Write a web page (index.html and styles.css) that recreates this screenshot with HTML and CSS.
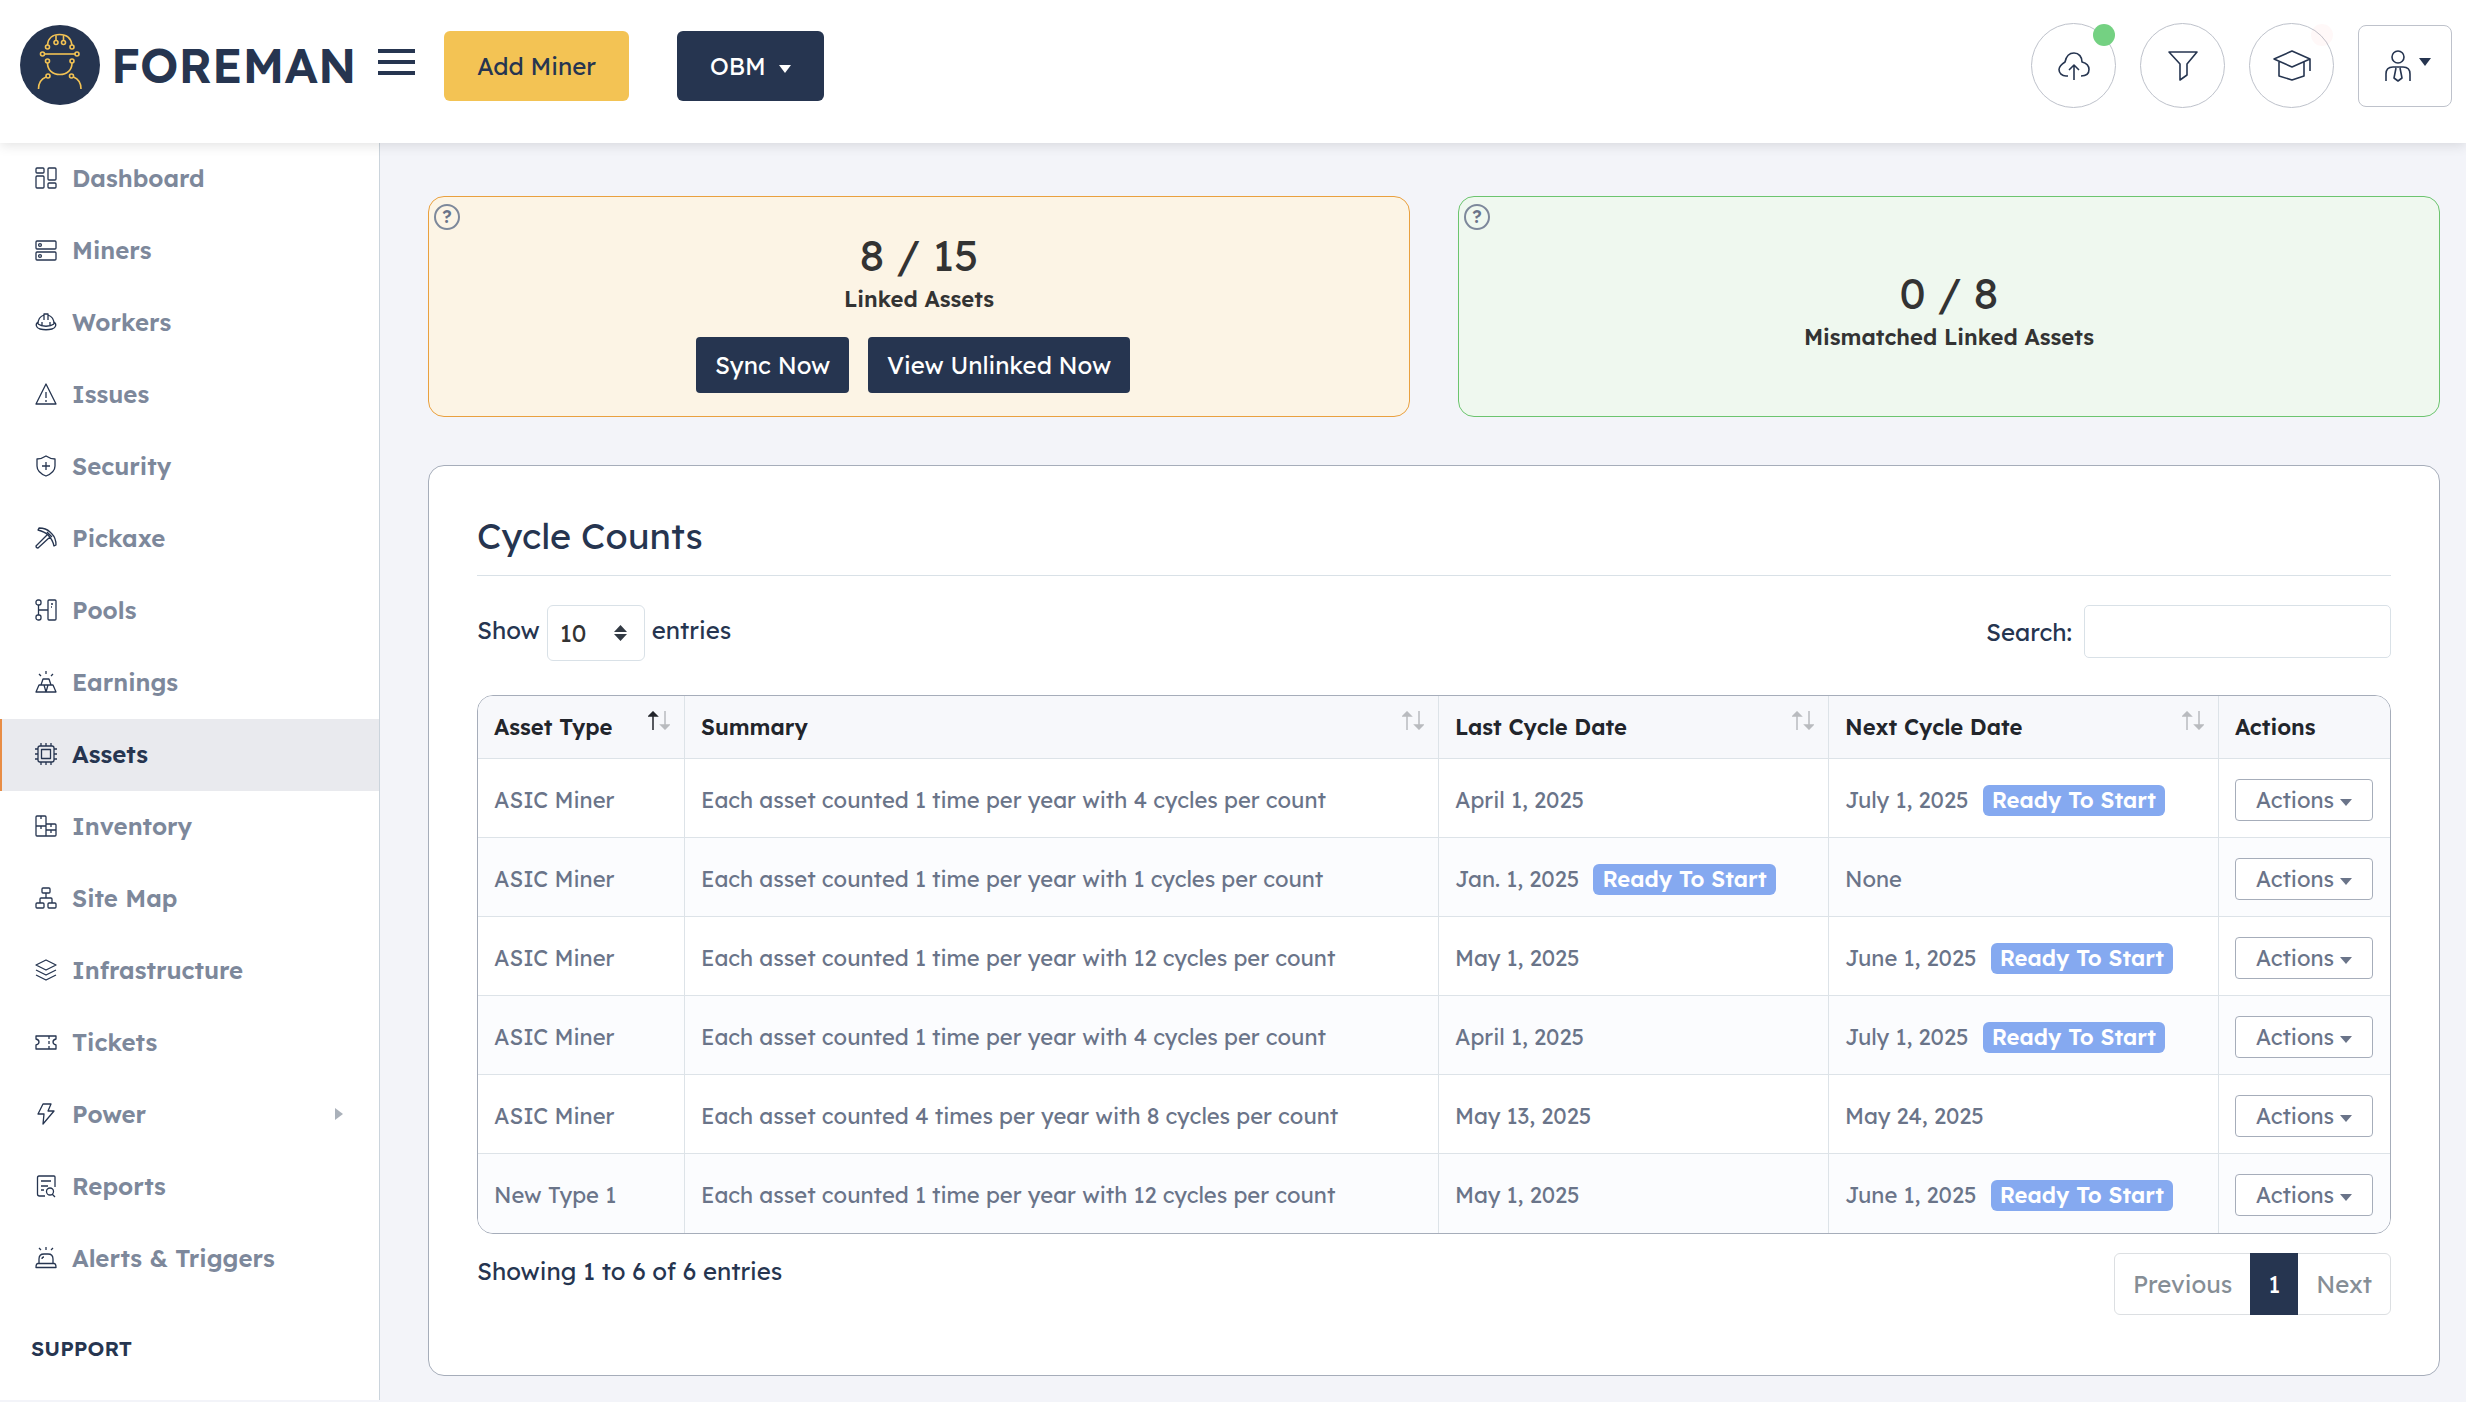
FILE: index.html
```html
<!DOCTYPE html>
<html lang="en">
<head>
  <meta charset="UTF-8" />
  <meta name="viewport" content="width=device-width, initial-scale=1" />
  <title>Foreman - Assets</title>
  <link rel="stylesheet" href="styles.css">
</head>
<body>
  <header class="topbar">
    <a href="#" class="brand">
      <svg class="brand-logo" viewBox="0 0 80 80">
        <circle cx="40" cy="40" r="40" fill="#263550"/>
        <g fill="none" stroke="#f3c354" stroke-width="1.600">
          <path d="M27.500 20C28 13 33 9.500 39.500 9.500S51 13 52 20M36 10v5.500M43.500 10v5.500"/>
          <circle cx="27.500" cy="22" r="2"/><circle cx="52" cy="22" r="2"/>
          <circle cx="36" cy="17.500" r="2"/><circle cx="43.500" cy="17.500" r="2"/>
          <circle cx="22.500" cy="29" r="2"/><circle cx="57" cy="29" r="2"/>
          <path d="M24.500 29H55"/>
          <circle cx="27.500" cy="36" r="2"/><circle cx="52" cy="36" r="2"/>
          <path d="M27.500 38c0 7 5 11.500 12.300 11.500S52 45 52 38"/>
          <circle cx="28" cy="51" r="2"/><circle cx="51.500" cy="51" r="2"/>
          <path d="M26 52c-5 2-7.500 5.500-7.500 12M53.500 52c5 2 7.500 5.500 7.500 12"/>
        </g>
      </svg>
      <span>FOREMAN</span>
    </a>
    <button class="menu-toggle" aria-label="Toggle menu"><i></i><i></i><i></i></button>
    <button class="btn-top btn-yellow">Add Miner</button>
    <button class="btn-top btn-navy">OBM <span class="caret"></span></button>

    <div class="top-actions">
      <button class="round-btn" aria-label="Uploads">
        <svg width="32" height="30" viewBox="0 0 32 30"><path d="M10 25H8C4 25 1 22 1 18.500S4 13 7 11C8 6 11 2 16 2s8 4 8 9c4 1 7 3.500 7 7.500S28 25 23 25M16 29V14M11 19l5-5 5 5"/></svg>
        <span class="dot dot-green"></span>
      </button>
      <button class="round-btn" aria-label="Filter">
        <svg width="32" height="32" viewBox="0 0 32 32"><path d="M2 2h28L20 14v11l-7 5V14z"/></svg>
      </button>
      <button class="round-btn" aria-label="Academy">
        <svg width="40" height="32" viewBox="0 0 40 32"><path d="M20 1l18 8-18 8L2 9zM7 12v14l13 4 12-4V12M38 9v12"/></svg>
        <span class="dot dot-faint"></span>
      </button>
      <button class="user-btn" aria-label="Account">
        <svg width="26" height="32" viewBox="0 0 26 32"><circle cx="13" cy="7" r="6"/><path d="M1 31v-7c0-5 3-7 7-7h10c4 0 7 2 7 7v7M11 18l-2 10 4 3 4-3-2-10"/></svg>
        <span class="caret"></span>
      </button>
    </div>
  </header>

  <div class="layout">
    <nav class="sidebar">
      <a href="#"><svg viewBox="0 0 22 22"><rect x="1" y="1" width="8" height="5" rx="1"/><rect x="1" y="9" width="8" height="12" rx="1"/><rect x="13" y="1" width="8" height="12" rx="1"/><rect x="13" y="16" width="8" height="5" rx="1"/></svg>Dashboard</a>
      <a href="#"><svg viewBox="0 0 22 22"><rect x="1" y="2" width="20" height="8" rx="1"/><rect x="1" y="13" width="20" height="8" rx="1"/><circle cx="5" cy="6" r="1.400"/><circle cx="5" cy="17" r="1.400"/></svg>Miners</a>
      <a href="#"><svg viewBox="0 0 22 22"><path d="M3 13c0-5 3-8 6-9v5M13 9V4c3 1 6 4 6 9M9 4V3h4v1M3 11c-3 2-2 6 2 7s8 1 12 0 5-5 2-7M3 13c4 3 12 3 16 0M7 14v-3M15 14v-3"/></svg>Workers</a>
      <a href="#"><svg viewBox="0 0 22 22"><path d="M11 1l10 20H1zM11 9v6M11 17v2"/></svg>Issues</a>
      <a href="#"><svg viewBox="0 0 22 22"><path d="M11 1c3 2 6 3 9 3v7c0 5-4 8-9 10-5-2-9-5-9-10V4c3 0 6-1 9-3zM11 7v8M7 11h8"/></svg>Security</a>
      <a href="#"><svg viewBox="0 0 22 22"><path d="M4 1c4 0 8 1 11 4l2 2c3 3 4 7 4 11l-2 1c-1-5-3-8-6-11S7 4 3 3zM12 8L1 19q0 2 2 2L15 10M12 5l5 5"/></svg>Pickaxe</a>
      <a href="#"><svg viewBox="0 0 22 22"><rect x="1" y="1" width="5" height="5" rx="2"/><rect x="1" y="16" width="5" height="5" rx="2"/><rect x="13" y="1" width="8" height="20" rx="1"/><path d="M3.500 6v10M3.500 11H13M16 5h2M16 8h1"/></svg>Pools</a>
      <a href="#"><svg viewBox="0 0 22 22"><path d="M8 8h6l2 6H6zM4 14h5l2 7H1zM13 14h5l3 7H11zM11 0v3M4 3l2 2M18 3l-2 2"/></svg>Earnings</a>
      <a href="#" class="active"><svg viewBox="0 0 22 22"><rect x="3" y="3" width="16" height="16" rx="2"/><rect x="6.500" y="6.500" width="9" height="9"/><path d="M6 0v3M11 0v3M16 0v3M6 19v3M11 19v3M16 19v3M0 6h3M0 11h3M0 16h3M19 6h3M19 11h3M19 16h3"/></svg>Assets</a>
      <a href="#"><svg viewBox="0 0 22 22"><path d="M1 11V2q0-1 1-1h8q1 0 1 1v18q0 1-1 1H2q-1 0-1-1v-9h10M11 9h9q1 0 1 1v10q0 1-1 1h-9M11 15h10M6 1v3M6 11v3M16 9v3M16 15v3"/></svg>Inventory</a>
      <a href="#"><svg viewBox="0 0 22 22"><rect x="7" y="1" width="8" height="5" rx="1"/><rect x="1" y="16" width="8" height="5" rx="1"/><rect x="13" y="16" width="8" height="5" rx="1"/><path d="M11 6v5M5 16v-4q0-1 1-1h10q1 0 1 1v4"/></svg>Site Map</a>
      <a href="#"><svg viewBox="0 0 22 22"><path d="M11 1l10 5-10 5L1 6zM1 11l10 5 10-5M1 16l10 5 10-5"/></svg>Infrastructure</a>
      <a href="#"><svg viewBox="0 0 22 22"><path d="M1 5h20v3c-4 1-4 5 0 6v4H1v-4c4-1 4-5 0-6zM14 5v3M14 10v3M14 15v3"/></svg>Tickets</a>
      <a href="#"><svg viewBox="0 0 22 22"><path d="M8 1h8l-3 7h6L8 21l1-10H3z"/></svg>Power<span class="nav-caret"></span></a>
      <a href="#"><svg viewBox="0 0 22 22"><path d="M20 12V2q0-1-1-1H4Q2.500 1 2.500 3v16q0 2 2 2H10M6 6h10M6 11h7M6 15h3M17 19l3 3"/><circle cx="15" cy="16.500" r="3.500"/></svg>Reports</a>
      <a href="#"><svg viewBox="0 0 22 22"><path d="M4 16v-4q0-5 5-5h4q5 0 5 5v4M3 16.500h16q2 0 2 4H1q0-4 2-4zM7 12q0-2 2-2M11 0v3M4 1l2 2M18 1l-2 2"/></svg>Alerts &amp; Triggers</a>
      <h6 class="nav-heading">Support</h6>
    </nav>

    <main class="content">
      <div class="cards">
        <section class="card card-warning">
          <button class="help" aria-label="Help">?</button>
          <div class="card-value">8 / 15</div>
          <div class="card-label">Linked Assets</div>
          <div class="card-buttons">
            <button class="btn">Sync Now</button>
            <button class="btn">View Unlinked Now</button>
          </div>
        </section>
        <section class="card card-success">
          <button class="help" aria-label="Help">?</button>
          <div class="card-value">0 / 8</div>
          <div class="card-label">Mismatched Linked Assets</div>
        </section>
      </div>

      <section class="panel">
        <h2>Cycle Counts</h2>
        <div class="table-controls">
          <label class="length">Show
            <span class="select-wrap">
              <select><option>10</option><option>25</option><option>50</option></select>
              <svg width="13" height="16" viewBox="0 0 13 16"><path d="M0 7l6.500-7L13 7zM0 9h13l-6.500 7z"/></svg>
            </span>
            entries</label>
          <label class="search">Search: <input type="search"></label>
        </div>

        <div class="table-wrap">
          <table id="cycles">
            <colgroup>
              <col class="col-type"><col><col class="col-date"><col class="col-date"><col class="col-actions">
            </colgroup>
            <thead>
              <tr>
                <th>Asset Type<span class="sort sorted"></span></th>
                <th>Summary<span class="sort"></span></th>
                <th>Last Cycle Date<span class="sort"></span></th>
                <th>Next Cycle Date<span class="sort"></span></th>
                <th>Actions</th>
              </tr>
            </thead>
            <tbody>
              <tr>
                <td>ASIC Miner</td>
                <td>Each asset counted 1 time per year with 4 cycles per count</td>
                <td>April 1, 2025</td>
                <td>July 1, 2025 <span class="badge">Ready To Start</span></td>
                <td><button class="btn-row">Actions <span class="caret"></span></button></td>
              </tr>
              <tr>
                <td>ASIC Miner</td>
                <td>Each asset counted 1 time per year with 1 cycles per count</td>
                <td>Jan. 1, 2025 <span class="badge">Ready To Start</span></td>
                <td>None</td>
                <td><button class="btn-row">Actions <span class="caret"></span></button></td>
              </tr>
              <tr>
                <td>ASIC Miner</td>
                <td>Each asset counted 1 time per year with 12 cycles per count</td>
                <td>May 1, 2025</td>
                <td>June 1, 2025 <span class="badge">Ready To Start</span></td>
                <td><button class="btn-row">Actions <span class="caret"></span></button></td>
              </tr>
              <tr>
                <td>ASIC Miner</td>
                <td>Each asset counted 1 time per year with 4 cycles per count</td>
                <td>April 1, 2025</td>
                <td>July 1, 2025 <span class="badge">Ready To Start</span></td>
                <td><button class="btn-row">Actions <span class="caret"></span></button></td>
              </tr>
              <tr>
                <td>ASIC Miner</td>
                <td>Each asset counted 4 times per year with 8 cycles per count</td>
                <td>May 13, 2025</td>
                <td>May 24, 2025</td>
                <td><button class="btn-row">Actions <span class="caret"></span></button></td>
              </tr>
              <tr>
                <td>New Type 1</td>
                <td>Each asset counted 1 time per year with 12 cycles per count</td>
                <td>May 1, 2025</td>
                <td>June 1, 2025 <span class="badge">Ready To Start</span></td>
                <td><button class="btn-row">Actions <span class="caret"></span></button></td>
              </tr>
            </tbody>
          </table>
        </div>

        <div class="table-footer">
          <div>Showing 1 to 6 of 6 entries</div>
          <div class="pagination">
            <a href="#">Previous</a>
            <a href="#" class="current">1</a>
            <a href="#">Next</a>
          </div>
        </div>
      </section>
    </main>
  </div>

  <script>
    // every sortable header gets the same pair of arrows
    document.querySelectorAll('.sort').forEach(el => {
      el.innerHTML = '<svg width="22" height="19" viewBox="0 0 22 19">' +
        '<path class="up" d="M5 19V3M1 5l4-4 4 4z"/>' +
        '<path class="down" d="M17 0v16M13 14l4 4 4-4z"/></svg>';
    });
  </script>
</body>
</html>
```
FILE: styles.css
```css
* {
  box-sizing: border-box;
}
body {
  margin: 0;
  font-family: Lexend, Inter, sans-serif;
  font-size: 24px;
  line-height: 36px;
  color: #263550;
  background-color: #f3f4f9;
}
a {
  color: inherit;
  text-decoration: none;
}
button, select, input {
  font: inherit;
  color: inherit;
  cursor: pointer;
}
svg {
  fill: none;
  stroke: #263550;
  stroke-width: 1.6;
  stroke-linejoin: round;
}
.caret {
  display: inline-block;
  border: 6px solid transparent;
  border-top: 8px solid currentColor;
  border-bottom: 0;
}

/* top bar */
.topbar {
  position: relative;
  z-index: 2;
  display: flex;
  align-items: flex-start;
  height: 143px;
  padding: 23px 14px 0 20px;
  background-color: #fff;
  box-shadow: 0 2px 12px rgba(0, 0, 0, 0.12);
}
.brand {
  display: flex;
  align-items: center;
  gap: 11px;
  width: 358px;
  height: 84px;
  font-size: 48px;
  font-weight: 600;
}
.brand-logo {
  width: 80px;
  height: 80px;
  stroke: none;
}
.menu-toggle {
  display: flex;
  flex-direction: column;
  gap: 7px;
  width: 37px;
  margin: 26px 29px 0 0;
  padding: 0;
  border: none;
  background: none;
}
.menu-toggle i {
  width: 100%;
  height: 4px;
  background-color: #263550;
}
.btn-top {
  height: 70px;
  margin: 8px 48px 0 0;
  padding: 0 33px;
  border: none;
  border-radius: 6px;
}
.btn-yellow {
  background-color: #f3c354;
}
.btn-navy {
  color: #fff;
  background-color: #263550;
}
.btn-navy .caret {
  margin: 0 0 2px 7px;
}
.top-actions {
  display: flex;
  align-items: center;
  gap: 24px;
  margin-left: auto;
}
.round-btn {
  position: relative;
  display: flex;
  align-items: center;
  justify-content: center;
  width: 85px;
  height: 85px;
  border: 1px solid #bec2cb;
  border-radius: 50%;
  background-color: #fff;
}
.dot {
  position: absolute;
  top: 0;
  right: 0;
  width: 22px;
  height: 22px;
  border-radius: 50%;
}
.dot-green {
  background-color: #74d182;
}
.dot-faint {
  background-color: rgba(255, 80, 80, 0.04);
}
.user-btn {
  display: flex;
  justify-content: center;
  gap: 8px;
  width: 94px;
  height: 82px;
  padding: 24px 0 0 6px;
  border: 1px solid #bec2cb;
  border-radius: 8px;
  background-color: #fff;
}
.user-btn .caret {
  margin-top: 8px;
}

/* sidebar */
.layout {
  display: flex;
  align-items: stretch;
}
.sidebar {
  flex: none;
  width: 380px;
  border-right: 1px solid #cbd4dc;
  background-color: #fff;
}
.sidebar a {
  display: flex;
  align-items: center;
  height: 72px;
  padding: 0 0 2px 35px;
  font-weight: 600;
  color: #7d889b;
}
.sidebar svg {
  width: 22px;
  height: 22px;
  margin-right: 15px;
  stroke-width: 1.3;
  overflow: visible;
}
.sidebar a.active {
  padding-left: 33px;
  border-left: 2px solid #e88d45;
  color: #263550;
  background-color: #e9eaee;
}
.nav-caret {
  margin: 0 36px 0 auto;
  border: 6px solid transparent;
  border-left: 8px solid #aab1ba;
  border-right: 0;
}
.nav-heading {
  margin: 35px 0 33px 31px;
  font-size: 21px;
  font-weight: 600;
  text-transform: uppercase;
}

/* content */
.content {
  flex: 1;
  min-width: 0;
  padding: 53px 26px 24px 48px;
}
.cards {
  display: grid;
  grid-template-columns: 1fr 1fr;
  gap: 48px;
  margin-bottom: 48px;
}
.card {
  position: relative;
  display: flex;
  flex-direction: column;
  align-items: center;
  justify-content: center;
  min-height: 221px;
  padding-top: 8px;
  border: 1px solid;
  border-radius: 16px;
  color: #333;
}
.card-warning {
  border-color: #e9a03f;
  background-color: #fcf4e5;
}
.card-success {
  border-color: #6cc46f;
  background-color: #eff8ef;
}
.help {
  position: absolute;
  top: 7px;
  left: 5px;
  width: 26px;
  height: 26px;
  padding: 0;
  border: 2px solid #7d889b;
  border-radius: 50%;
  font-size: 18px;
  font-weight: 600;
  line-height: 22px;
  color: #6a7489;
  background: none;
}
.card-value {
  font-size: 43px;
  line-height: 52px;
}
.card-label {
  font-size: 22px;
  font-weight: 600;
}
.card-buttons {
  margin-top: 20px;
}
.btn {
  height: 56px;
  margin-right: 12px;
  padding: 0 19px;
  border: none;
  border-radius: 4px;
  color: #fff;
  background-color: #263550;
}

/* table panel */
.panel {
  padding: 46px 48px 60px;
  border: 1px solid #a6adba;
  border-radius: 16px;
  background-color: #fff;
}
.panel h2 {
  margin: 0 0 29px;
  padding-bottom: 15px;
  border-bottom: 1px solid #d9e1e7;
  font-size: 36px;
  font-weight: 400;
  line-height: 48px;
}
.table-controls {
  display: flex;
  justify-content: space-between;
  align-items: flex-start;
  margin-bottom: 34px;
}
.length, .search {
  display: flex;
  gap: 7px;
}
.length {
  line-height: 50px;
}
.search {
  align-items: center;
  gap: 12px;
}
.select-wrap {
  position: relative;
}
.select-wrap svg {
  position: absolute;
  top: 20px;
  right: 18px;
  fill: #333a44;
  stroke: none;
  pointer-events: none;
}
.length select {
  display: block;
  width: 98px;
  height: 56px;
  padding: 0 12px;
  border: 1px solid #d9e1e7;
  border-radius: 6px;
  color: #333;
  background-color: #fff;
  appearance: none;
}
.search input {
  width: 307px;
  height: 53px;
  padding: 0 12px;
  border: 1px solid #d9e1e7;
  border-radius: 5px;
  background-color: #fff;
}
.table-wrap {
  overflow: hidden;
  border: 1px solid #a6adba;
  border-radius: 16px;
}
table {
  width: 100%;
  table-layout: fixed;
  border-collapse: separate;
  border-spacing: 0;
  font-size: 22px;
}
.col-type {
  width: 207px;
}
.col-date {
  width: 390px;
}
.col-actions {
  width: 171px;
}
th, td {
  padding: 0 16px;
  border-right: 1px solid #dde3e8;
  border-bottom: 1px solid #dde3e8;
  text-align: left;
  white-space: nowrap;
}
th:last-child, td:last-child {
  border-right: none;
}
tr:last-child td {
  border-bottom: none;
}
th {
  position: relative;
  height: 63px;
  font-weight: 600;
  color: #22252b;
  background-color: #f7f8fb;
}
td {
  height: 79px;
  padding-top: 3px;
  color: #6a7489;
}
tr:nth-child(even) td {
  background-color: #fbfcfe;
}
.sort {
  position: absolute;
  top: 15px;
  right: 14px;
  line-height: 0;
}
.sort path {
  stroke: #b9bbbf;
  fill: #b9bbbf;
  stroke-linejoin: miter;
  stroke-width: 1.5;
}
.sorted .up {
  stroke: #22252b;
  fill: #22252b;
}
.badge {
  display: inline-block;
  margin-left: 8px;
  padding: 0 9px;
  border-radius: 6px;
  font-weight: 600;
  line-height: 31px;
  color: #fff;
  background-color: #85a9f0;
}
.btn-row {
  width: 138px;
  height: 42px;
  padding: 0;
  border: 1px solid #a6adba;
  border-radius: 4px;
  background-color: #fff;
}
.btn-row .caret {
  margin-bottom: 2px;
  border-width: 7px 6px 0;
}
.table-footer {
  display: flex;
  justify-content: space-between;
  align-items: flex-start;
  margin-top: 19px;
}
.pagination {
  display: flex;
  height: 62px;
  border: 1px solid #dcdfe2;
  border-radius: 6px;
  line-height: 60px;
  color: #868e96;
}
.pagination a {
  padding: 0 18px;
}
.pagination .current {
  margin: -1px 0;
  line-height: 62px;
  color: #fff;
  background-color: #263550;
}
```
